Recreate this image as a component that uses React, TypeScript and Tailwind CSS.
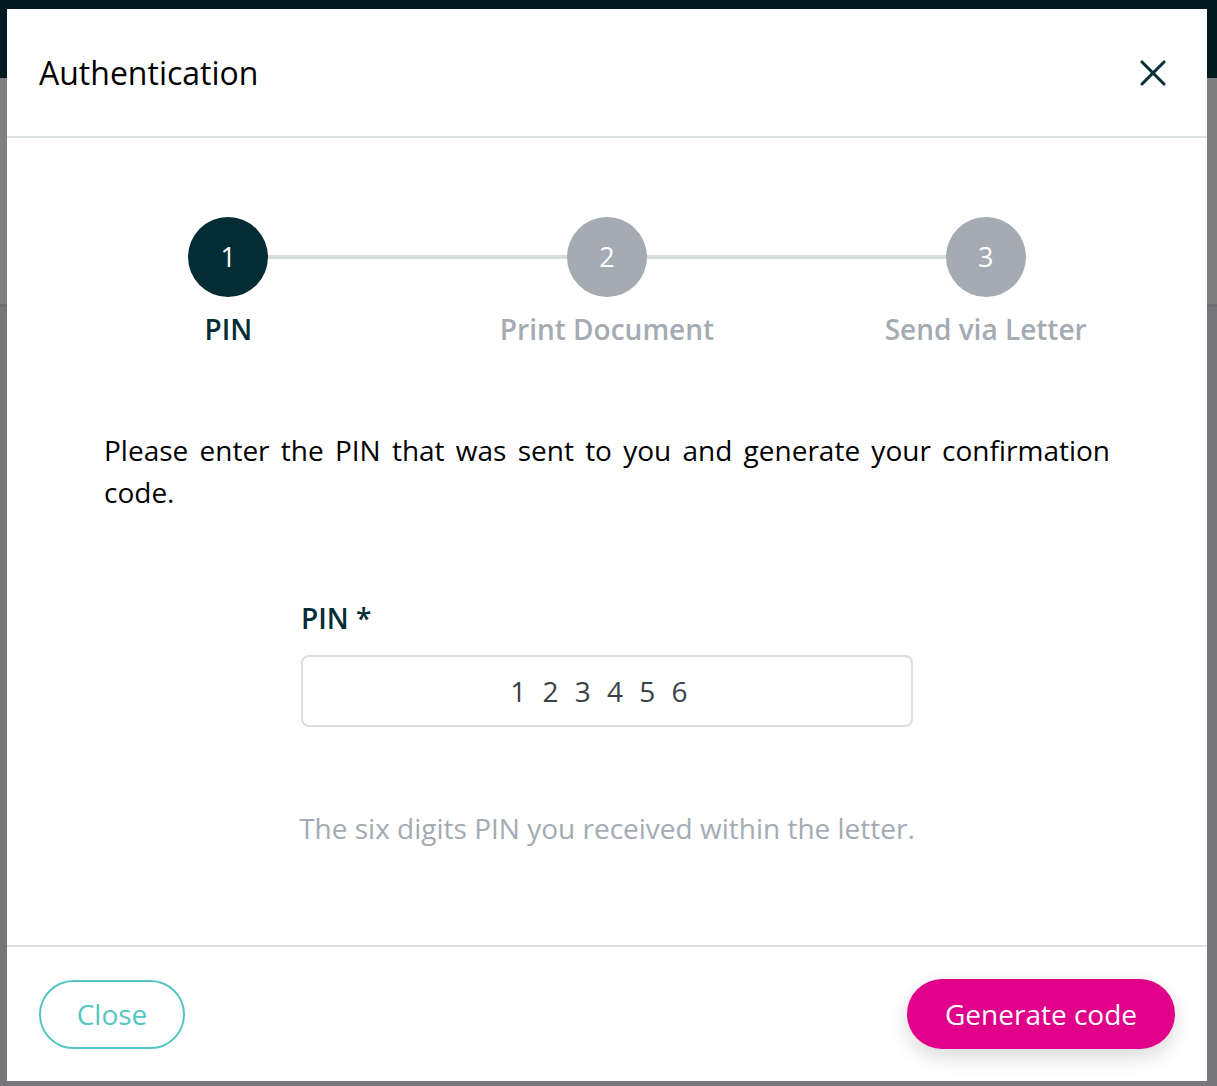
import { X } from "lucide-react";

const STEPS = [
  { n: 1, label: "PIN", active: true },
  { n: 2, label: "Print Document", active: false },
  { n: 3, label: "Send via Letter", active: false },
];

function Stepper() {
  return (
    <div className="grid grid-cols-3 px-[32px]">
      {STEPS.map((s, i) => (
        <div key={s.n} className="relative flex flex-col items-center">
          {i > 0 && (
            <div className="absolute left-[-50%] right-[50%] top-[38px] h-[4px] bg-[#d6dedd]" />
          )}
          <div
            className={
              s.active
                ? "relative z-10 flex h-[80px] w-[80px] items-center justify-center rounded-full bg-[#032c35] text-[27px] text-white"
                : "relative z-10 flex h-[80px] w-[80px] items-center justify-center rounded-full bg-[#a4abb3] text-[27px] text-white"
            }
          >
            {s.n}
          </div>
          <p
            className={
              s.active
                ? "mt-[14px] text-[28px] font-semibold leading-[36px] text-[#032c35]"
                : "mt-[14px] text-[28px] font-semibold leading-[36px] text-[#a4abb3]"
            }
          >
            {s.label}
          </p>
        </div>
      ))}
    </div>
  );
}

export default function App() {
  return (
    <div
      className="relative h-[1086px] w-[1217px] overflow-hidden bg-[#77777a]"
      style={{ fontFamily: '"Open Sans", "Noto Sans", sans-serif' }}
    >
      {/* page behind the overlay */}
      <div className="h-[78px] bg-[#031920]" />
      <div className="h-[226px] bg-[#7f7f7f]" />
      <div className="h-[3px] bg-[#6e6e70]" />

      <div className="absolute left-[7px] top-[9px] flex h-[1072px] w-[1200px] flex-col bg-white">
        <header className="flex h-[129px] items-center justify-between border-b-2 border-[#dce1e1] px-[32px]">
          <h1 className="text-[32px] leading-none text-black">Authentication</h1>
          <button className="text-[#08303a]">
            <X size={44} strokeWidth={1.7} />
          </button>
        </header>

        <div className="flex-1 pt-[79px]">
          <Stepper />

          <p className="mx-[97px] mt-[82px] text-justify text-[28px] leading-[42px] text-black">
            Please enter the PIN that was sent to you and generate your confirmation code.
          </p>

          <div className="mx-auto mt-[89px] w-[612px]">
            <label className="block text-[28px] font-semibold leading-[32px] text-[#032c35]">
              PIN *
            </label>
            <div className="mt-[21px] flex h-[72px] items-center justify-center rounded-[8px] border-2 border-[#dadee2] text-[28px] tracking-[0.58em] text-[#3a4249]">
              <span>123456</span>
            </div>
            <p className="-mx-[20px] mt-[85px] whitespace-nowrap text-center text-[28px] leading-[32px] text-[#a4abb3]">
              The six digits PIN you received within the letter.
            </p>
          </div>
        </div>

        <footer className="flex h-[136px] items-center justify-between border-t-2 border-[#dce1e1] px-[32px]">
          <button className="h-[69px] w-[146px] rounded-full border-2 border-[#55c6c2] text-[28px] text-[#55c6c2]">
            Close
          </button>
          <button className="h-[70px] w-[268px] rounded-full bg-[#e0008a] text-[28px] text-white shadow-[0_8px_20px_rgba(0,0,0,0.15)]">
            Generate code
          </button>
        </footer>
      </div>
    </div>
  );
}
